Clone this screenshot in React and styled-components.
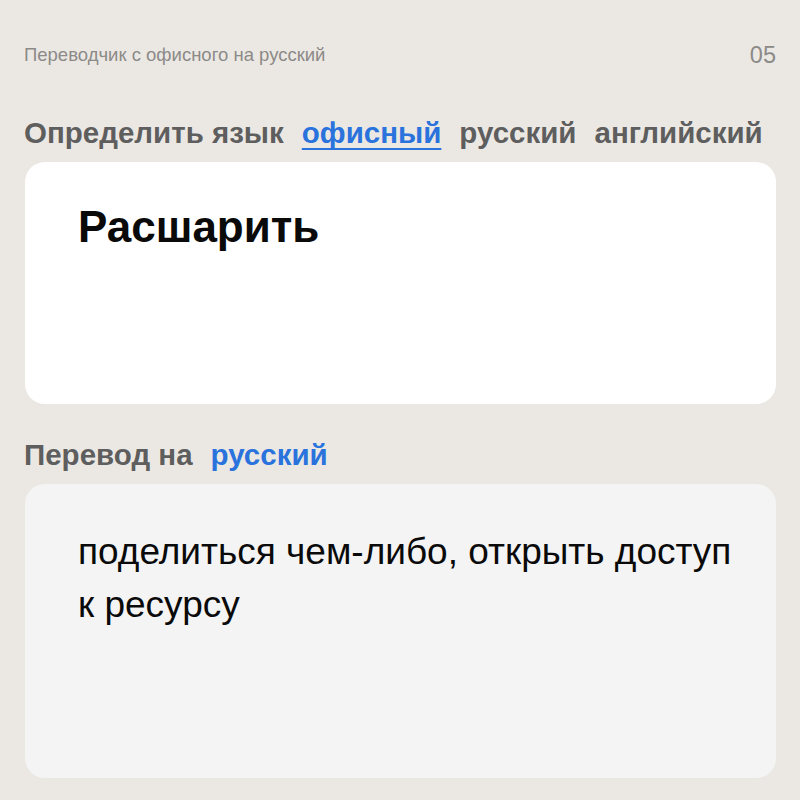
import React from "react";
import styled, { createGlobalStyle } from "styled-components";

const Global = createGlobalStyle`
  html, body { margin: 0; padding: 0; }
  body { background: #ebe8e4; font-family: "Liberation Sans", Arial, sans-serif; }
`;

const Page = styled.div`
  width: 800px;
  height: 800px;
  box-sizing: border-box;
  padding: 40px 24px 22px 24px;
  display: flex;
  flex-direction: column;
  background: #ebe8e4;
`;

const Header = styled.div`
  display: flex;
  justify-content: space-between;
  align-items: center;
  height: 30px;
  color: #8b8a87;
`;

const Title = styled.span`
  font-size: 18.5px;
`;

const PageNum = styled.span`
  font-size: 23.5px;
`;

const LangRow = styled.div`
  display: flex;
  align-items: center;
  gap: 18px;
  margin-top: ${(p) => p.$top}px;
  height: 30px;
  font-size: 29.5px;
  font-weight: 700;
  color: #5e5e5e;
`;

const Lang = styled.span`
  color: ${(p) => (p.$active ? "#2a72dc" : "#5e5e5e")};
  text-decoration: ${(p) => (p.$underline ? "underline" : "none")};
  text-decoration-thickness: 2px;
  text-underline-offset: 5px;
  text-decoration-skip-ink: none;
`;

const Card = styled.div`
  background: ${(p) => p.$bg};
  border-radius: 20px;
  margin-top: 14px;
  margin-left: 1px;
  height: ${(p) => p.$h}px;
  box-sizing: border-box;
  padding: ${(p) => p.$pad};
`;

const Source = styled.div`
  font-size: 44px;
  font-weight: 700;
  color: #0a0a0a;
  line-height: 1;
`;

const Result = styled.div`
  font-size: 37px;
  color: #0a0a0a;
  line-height: 53px;
  white-space: nowrap;
`;

export default function App() {
  return (
    <>
      <Global />
      <Page>
        <Header>
          <Title>Переводчик с офисного на русский</Title>
          <PageNum>05</PageNum>
        </Header>
        <LangRow $top={48}>
          <Lang>Определить язык</Lang>
          <Lang $active $underline>офисный</Lang>
          <Lang>русский</Lang>
          <Lang>английский</Lang>
        </LangRow>
        <Card $bg="#ffffff" $h={242} $pad="43px 53px">
          <Source>Расшарить</Source>
        </Card>
        <LangRow $top={36}>
          <Lang>Перевод на</Lang>
          <Lang $active>русский</Lang>
        </LangRow>
        <Card $bg="#f4f4f4" $h={294} $pad="41px 20px 41px 53px">
          <Result>
            поделиться чем-либо, открыть доступ
            <br />
            к ресурсу
          </Result>
        </Card>
      </Page>
    </>
  );
}
